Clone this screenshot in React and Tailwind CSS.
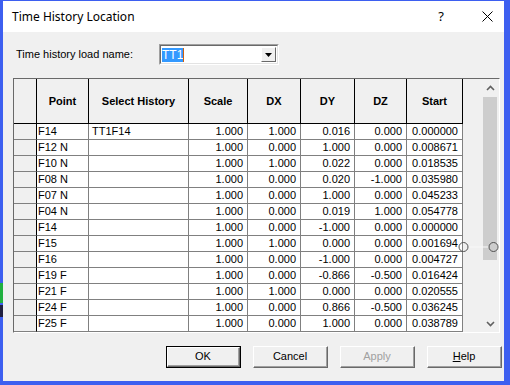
const rows = [
  ["F14", "TT1F14", "1.000", "1.000", "0.016", "0.000", "0.000000"],
  ["F12 N", "", "1.000", "0.000", "1.000", "0.000", "0.008671"],
  ["F10 N", "", "1.000", "1.000", "0.022", "0.000", "0.018535"],
  ["F08 N", "", "1.000", "0.000", "0.020", "-1.000", "0.035980"],
  ["F07 N", "", "1.000", "0.000", "1.000", "0.000", "0.045233"],
  ["F04 N", "", "1.000", "0.000", "0.019", "1.000", "0.054778"],
  ["F14", "", "1.000", "0.000", "-1.000", "0.000", "0.000000"],
  ["F15", "", "1.000", "1.000", "0.000", "0.000", "0.001694"],
  ["F16", "", "1.000", "0.000", "-1.000", "0.000", "0.004727"],
  ["F19 F", "", "1.000", "0.000", "-0.866", "-0.500", "0.016424"],
  ["F21 F", "", "1.000", "1.000", "0.000", "0.000", "0.020555"],
  ["F24 F", "", "1.000", "0.000", "0.866", "-0.500", "0.036245"],
  ["F25 F", "", "1.000", "0.000", "1.000", "0.000", "0.038789"],
];

const cols = [
  { name: "Point", w: "w-[52px]", align: "left", pad: "pl-[1px]" },
  { name: "Select History", w: "w-[100px]", align: "left", pad: "pl-[3px]" },
  { name: "Scale", w: "w-[59px]", align: "right", pad: "pr-[4px]" },
  { name: "DX", w: "w-[53px]", align: "right", pad: "pr-[4px]" },
  { name: "DY", w: "w-[54px]", align: "right", pad: "pr-[4px]" },
  { name: "DZ", w: "w-[52px]", align: "right", pad: "pr-[4px]" },
  { name: "Start", w: "w-[56px]", align: "right", pad: "pr-[4px]" },
];

function Chevron({ up }) {
  return (
    <svg width="9" height="6" viewBox="0 0 9 6">
      <path
        d={up ? "M1 5 L4.5 1.5 L8 5" : "M1 1 L4.5 4.5 L8 1"}
        fill="none"
        stroke="#606060"
        strokeWidth="1.6"
      />
    </svg>
  );
}

function Button({ children, primary, disabled }) {
  return (
    <div
      className={
        "w-[75px] h-[22px] box-border " +
        (primary ? "border border-black" : "")
      }
    >
      <div className="w-full h-full border-t border-l border-white border-r border-b border-r-[#696969] border-b-[#696969] bg-[#f0f0f0]">
        <div
          className={
            "w-full h-full border-r border-b border-r-[#a0a0a0] border-b-[#a0a0a0] flex items-center justify-center text-[11px] " +
            (disabled ? "text-[#a0a0a0]" : "text-black")
          }
        >
          {children}
        </div>
      </div>
    </div>
  );
}

export default function App() {
  return (
    <div
      className="w-[510px] h-[385px] bg-[#3d5ff0] pt-[1px] pl-[3px] pr-[6px] pb-[4px] flex flex-col relative"
      style={{ fontFamily: '"Liberation Sans", Arial, sans-serif' }}
    >
      <div className="absolute left-0 top-[283px] w-[3px] h-[20px] bg-[#20b040]" />
      <div className="absolute left-0 top-[305px] w-[3px] h-[12px] bg-[#202040]" />

      {/* title bar */}
      <div className="h-[31px] bg-white flex items-center pl-[9px] pr-[10px] shrink-0">
        <span
          className="text-[12px] text-black flex-1"
          style={{ fontFamily: '"Noto Sans", sans-serif' }}
        >
          Time History Location
        </span>
        <span
          className="text-[13px] text-black mr-[38px]"
          style={{ fontFamily: '"Noto Sans", sans-serif' }}
        >
          ?
        </span>
        <svg width="11" height="11" viewBox="0 0 11 11" className="mr-[1px]">
          <path d="M0.5 0.5 L10.5 10.5 M10.5 0.5 L0.5 10.5" stroke="#000" strokeWidth="1" />
        </svg>
      </div>

      {/* client */}
      <div className="flex-1 bg-[#f0f0f0] relative flex flex-col">
        <div className="flex items-center mt-[12px] h-[21px]">
          <span className="ml-[13px] w-[143px] text-[11px] text-black">
            Time history load name:
          </span>
          <div className="w-[120px] h-[21px] border border-t-[#a0a0a0] border-l-[#a0a0a0] border-r-white border-b-white">
            <div className="w-full h-full border border-t-[#696969] border-l-[#696969] border-r-[#e3e3e3] border-b-[#e3e3e3] bg-white flex items-center pl-[1px] pr-[1px]">
              <span className="bg-[#3399ff] text-white text-[12px] leading-[14px] h-[14px] whitespace-nowrap">
                TT1
              </span>
              <span className="w-[1px] h-[14px] bg-[#d06010]" />
              <div className="flex-1" />
              <div className="w-[15px] h-[15px] border border-t-white border-l-white border-r-[#696969] border-b-[#696969] bg-[#f0f0f0] flex items-center justify-center">
                <svg width="7" height="4" viewBox="0 0 7 4">
                  <path d="M0 0 L7 0 L3.5 4 Z" fill="#000" />
                </svg>
              </div>
            </div>
          </div>
        </div>

        {/* grid */}
        <div className="ml-[10px] mt-[13px] w-[487px] h-[255px] border-t border-l border-[#696969] border-r border-b border-r-white border-b-white flex overflow-hidden text-[11px] text-black">
          <div className="w-[449px] flex flex-col shrink-0">
            <div className="flex h-[45px] shrink-0 border-b border-black bg-[#f0f0f0]">
              <div className="w-[23px] border-r border-black" />
              {cols.map((c) => (
                <div
                  key={c.name}
                  className={c.w + " border-r border-black flex items-center justify-center font-bold"}
                >
                  {c.name}
                </div>
              ))}
            </div>
            {rows.map((r, i) => (
              <div key={i} className="flex h-[16px] shrink-0">
                <div className="w-[23px] border-r border-r-black border-b border-b-[#808080] bg-[#f0f0f0]" />
                {cols.map((c, j) => (
                  <div
                    key={j}
                    className={
                      c.w +
                      " " +
                      c.pad +
                      " bg-white border-r border-b border-[#808080] leading-[15px] whitespace-nowrap overflow-hidden " +
                      (c.align === "right" ? "text-right" : "text-left")
                    }
                  >
                    {r[j]}
                  </div>
                ))}
              </div>
            ))}
          </div>
          <div className="w-[19px] shrink-0" />
          <div className="w-[16px] shrink-0 flex flex-col bg-[#f0f0f0]">
            <div className="h-[17px] flex items-center justify-center">
              <Chevron up />
            </div>
            <div className="mt-[1px] h-[163px] mx-[1px] bg-[#cdcdcd]" />
            <div className="flex-1" />
            <div className="h-[17px] flex items-center justify-center">
              <Chevron />
            </div>
          </div>
        </div>

        {/* buttons */}
        <div className="flex gap-[12px] mt-[13px] ml-[163px]">
          <Button primary>OK</Button>
          <Button>Cancel</Button>
          <Button disabled>Apply</Button>
          <Button>
            <span>
              <span className="underline">H</span>elp
            </span>
          </Button>
        </div>

        {/* overlay handles */}
        <svg
          className="absolute left-[452px] top-[206px]"
          width="48"
          height="18"
          viewBox="0 0 48 18"
        >
          <line x1="13" y1="9" x2="34" y2="9" stroke="#f8f8f8" strokeWidth="1" />
          <circle cx="8.5" cy="9" r="4.5" fill="none" stroke="#505050" strokeWidth="1" />
          <circle cx="38.5" cy="9" r="4.5" fill="none" stroke="#505050" strokeWidth="1" />
        </svg>
      </div>
    </div>
  );
}
